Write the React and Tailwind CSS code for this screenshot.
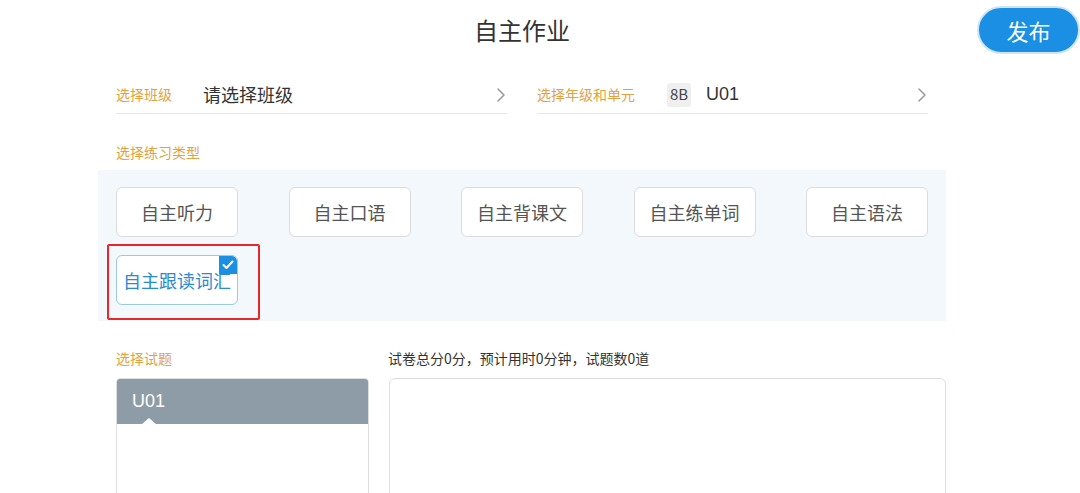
import React from 'react';

const types = ['自主听力', '自主口语', '自主背课文', '自主练单词', '自主语法'];

function Chevron() {
    return (
        <svg width="10" height="16" viewBox="0 0 10 16" className="shrink-0">
            <polyline points="2,2 8,8 2,14" fill="none" stroke="#9a9a9a" strokeWidth="1.5" strokeLinecap="round" strokeLinejoin="round" />
        </svg>
    );
}

export default function App() {
    return (
        <div className="w-[1080px] h-[493px] overflow-hidden bg-white text-[#333] font-['Noto_Sans_CJK_SC','Noto_Sans',sans-serif]">
            {/* HEADER */}
            <div className="flex items-center h-[60px]">
                <div className="ml-[98px] w-[848px] text-center text-[24px] leading-[32px] text-[#333]">自主作业</div>
                <button className="ml-[31px] w-[103px] h-[48px] rounded-full bg-[#1b8fe3] border-2 border-[#cfe5f7] text-white text-[22px] flex items-center justify-center">
                    发布
                </button>
            </div>

            <div className="ml-[98px] w-[848px]">
                {/* 班级 / 年级 */}
                <div className="px-[18px] pt-[16px] flex gap-[30px]">
                    <div className="w-[391px] h-[38px] border-b border-[#e6e6e6] flex items-center">
                        <span className="w-[87px] text-[14px] text-[#e3a23f]">选择班级</span>
                        <span className="flex-1 text-[18px] text-[#333]">请选择班级</span>
                        <span className="mr-[1px]"><Chevron /></span>
                    </div>
                    <div className="w-[391px] h-[38px] border-b border-[#e6e6e6] flex items-center">
                        <span className="w-[130px] text-[14px] text-[#e3a23f]">选择年级和单元</span>
                        <span className="w-[24px] h-[24px] rounded-[3px] bg-[#efefef] text-[15px] text-[#444] flex items-center justify-center">8B</span>
                        <span className="ml-[15px] flex-1 text-[18px] text-[#333] font-['Liberation_Sans',sans-serif]">U01</span>
                        <span className="mr-[1px]"><Chevron /></span>
                    </div>
                </div>

                {/* 练习类型 */}
                <div className="px-[18px] mt-[28px] text-[14px] leading-[20px] text-[#e3a23f]">选择练习类型</div>
                <div className="mt-[8px] h-[151px] bg-[#f3f8fc] px-[18px] pt-[17px]">
                    <div className="grid grid-cols-[repeat(5,122px)] justify-between gap-y-[18px]">
                        {types.map((t) => (
                            <div key={t} className="h-[50px] rounded-[6px] bg-white border border-[#dcdcdc] flex items-center justify-center text-[18px] text-[#555]">
                                {t}
                            </div>
                        ))}
                        <div className="relative">
                            <div className="absolute left-[-9px] top-[-11px] w-[153px] h-[76px] border-2 border-[#e8262b] rounded-[2px]" />
                            <div className="relative h-[50px] rounded-[6px] bg-white border border-[#9dcbd9] flex items-center justify-center text-[18px] text-[#2b8bd0] overflow-hidden">
                                自主跟读词汇
                                <div className="absolute right-0 top-0 w-[18px] h-[18px] bg-[#1b8fe3] rounded-tr-[5px] flex items-center justify-center">
                                    <svg width="12" height="10" viewBox="0 0 12 10">
                                        <polyline points="1.5,5 4.5,8 10.5,1.5" fill="none" stroke="white" strokeWidth="2" strokeLinecap="round" strokeLinejoin="round" />
                                    </svg>
                                </div>
                            </div>
                        </div>
                    </div>
                </div>

                {/* 试题 */}
                <div className="pl-[18px] mt-[27px] flex gap-[20px]">
                    <div className="w-[253px]">
                        <div className="text-[14px] leading-[20px] text-[#e3a23f]">选择试题</div>
                        <div className="mt-[10px] h-[130px] rounded-[4px] border border-[#dedede] overflow-hidden">
                            <div className="relative h-[45px] bg-[#8e9ca7] flex items-center pl-[15px] text-white text-[18px] font-['Liberation_Sans',sans-serif]">
                                U01
                                <div className="absolute left-[25px] bottom-0 w-0 h-0 border-l-[7px] border-r-[7px] border-b-[6px] border-l-transparent border-r-transparent border-b-white" />
                            </div>
                        </div>
                    </div>
                    <div className="flex-1">
                        <div className="text-[14px] leading-[20px] text-[#333] -ml-[1px]">试卷总分0分，预计用时0分钟，试题数0道</div>
                        <div className="mt-[10px] h-[130px] rounded-[6px] border border-[#dedede]" />
                    </div>
                </div>
            </div>
        </div>
    );
}
